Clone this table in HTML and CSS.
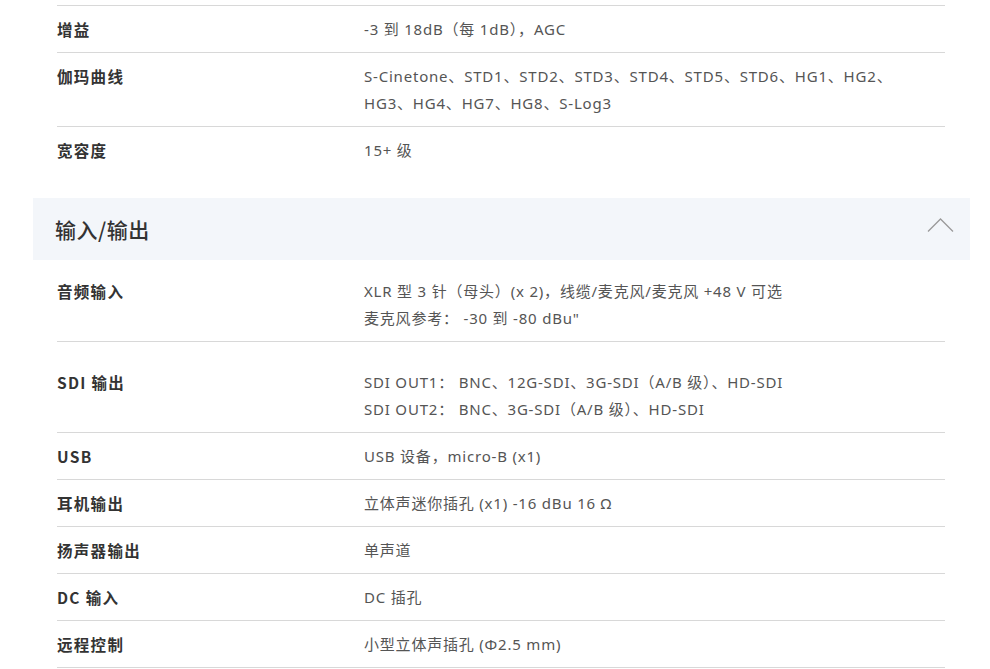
FILE: index.html
```html
<!DOCTYPE html>
<html lang="zh-CN">
<head>
<meta charset="utf-8">
<title>规格</title>
<link rel="stylesheet" href="styles.css">
</head>
<body>
<div class="wrap">
  <div class="table first">
    <div class="row"><div class="label">增益</div><div class="value">-3 到 18dB（每 1dB），AGC</div></div>
    <div class="row"><div class="label">伽玛曲线</div><div class="value">S-Cinetone、STD1、STD2、STD3、STD4、STD5、STD6、HG1、HG2、<br>HG3、HG4、HG7、HG8、S-Log3</div></div>
    <div class="row last"><div class="label">宽容度</div><div class="value">15+ 级</div></div>
  </div>

  <div class="section-head">
    <h2>输入/输出</h2>
    <svg class="chev" width="28" height="16" viewBox="0 0 28 16"><polyline points="1,14.5 13.5,2 26,14.5" fill="none" stroke="#9a9a9a" stroke-width="1.3"/></svg>
  </div>

  <div class="table io">
    <div class="row"><div class="label">音频输入</div><div class="value">XLR 型 3 针（母头）(x 2)，线缆/麦克风/麦克风 +48 V 可选<br>麦克风参考： -30 到 -80 dBu"</div></div>
    <div class="row tall"><div class="label">SDI 输出</div><div class="value">SDI OUT1： BNC、12G-SDI、3G-SDI（A/B 级）、HD-SDI<br>SDI OUT2： BNC、3G-SDI（A/B 级）、HD-SDI</div></div>
    <div class="row"><div class="label">USB</div><div class="value">USB 设备，micro-B (x1)</div></div>
    <div class="row"><div class="label">耳机输出</div><div class="value">立体声迷你插孔 (x1) -16 dBu 16 Ω</div></div>
    <div class="row"><div class="label">扬声器输出</div><div class="value">单声道</div></div>
    <div class="row"><div class="label">DC 输入</div><div class="value">DC 插孔</div></div>
    <div class="row"><div class="label">远程控制</div><div class="value">小型立体声插孔 (Φ2.5 mm)</div></div>
  </div>
</div>
</body>
</html>
```

FILE: styles.css
```css
html, body {
  margin: 0;
  padding: 0;
  background: #ffffff;
}

body {
  font-family: "Noto Sans", "Noto Sans CJK SC", sans-serif;
  font-size: 14px;
  color: #555555;
}

.wrap {
  margin-left: 33px;
  width: 937px;
  padding-top: 5px;
}

.table {
  margin: 0 25px 0 24px;
}

.first {
  border-top: 1px solid #d8d8d8;
}

.row {
  display: flex;
  padding: 10px 0 9px;
  border-bottom: 1px solid #d8d8d8;
  line-height: 27px;
}

.row.last {
  border-bottom: none;
}

.row.tall {
  padding-top: 27px;
}

.label {
  width: 307px;
  flex: none;
  font-family: "Noto Sans CJK SC", "Noto Sans", sans-serif;
  font-weight: 700;
  color: #333333;
  font-size: 15.5px;
  letter-spacing: 1.3px;
}

.value {
  flex: 1;
  font-family: "Noto Sans", "Noto Sans CJK SC", sans-serif;
  color: #555555;
  font-size: 15px;
  letter-spacing: 0.8px;
  white-space: nowrap;
}

.section-head {
  margin-top: 25px;
  height: 62px;
  background: #f3f6fa;
  display: flex;
  align-items: center;
  justify-content: space-between;
  padding: 0 15px 0 22px;
}

.section-head h2 {
  margin: 0;
  font-family: "Noto Sans CJK SC", sans-serif;
  font-size: 21px;
  font-weight: 500;
  color: #333333;
  line-height: 28px;
  letter-spacing: 0.5px;
}

.chev {
  display: block;
  margin-top: -9px;
}

.io {
  padding-top: 8px;
}
```
